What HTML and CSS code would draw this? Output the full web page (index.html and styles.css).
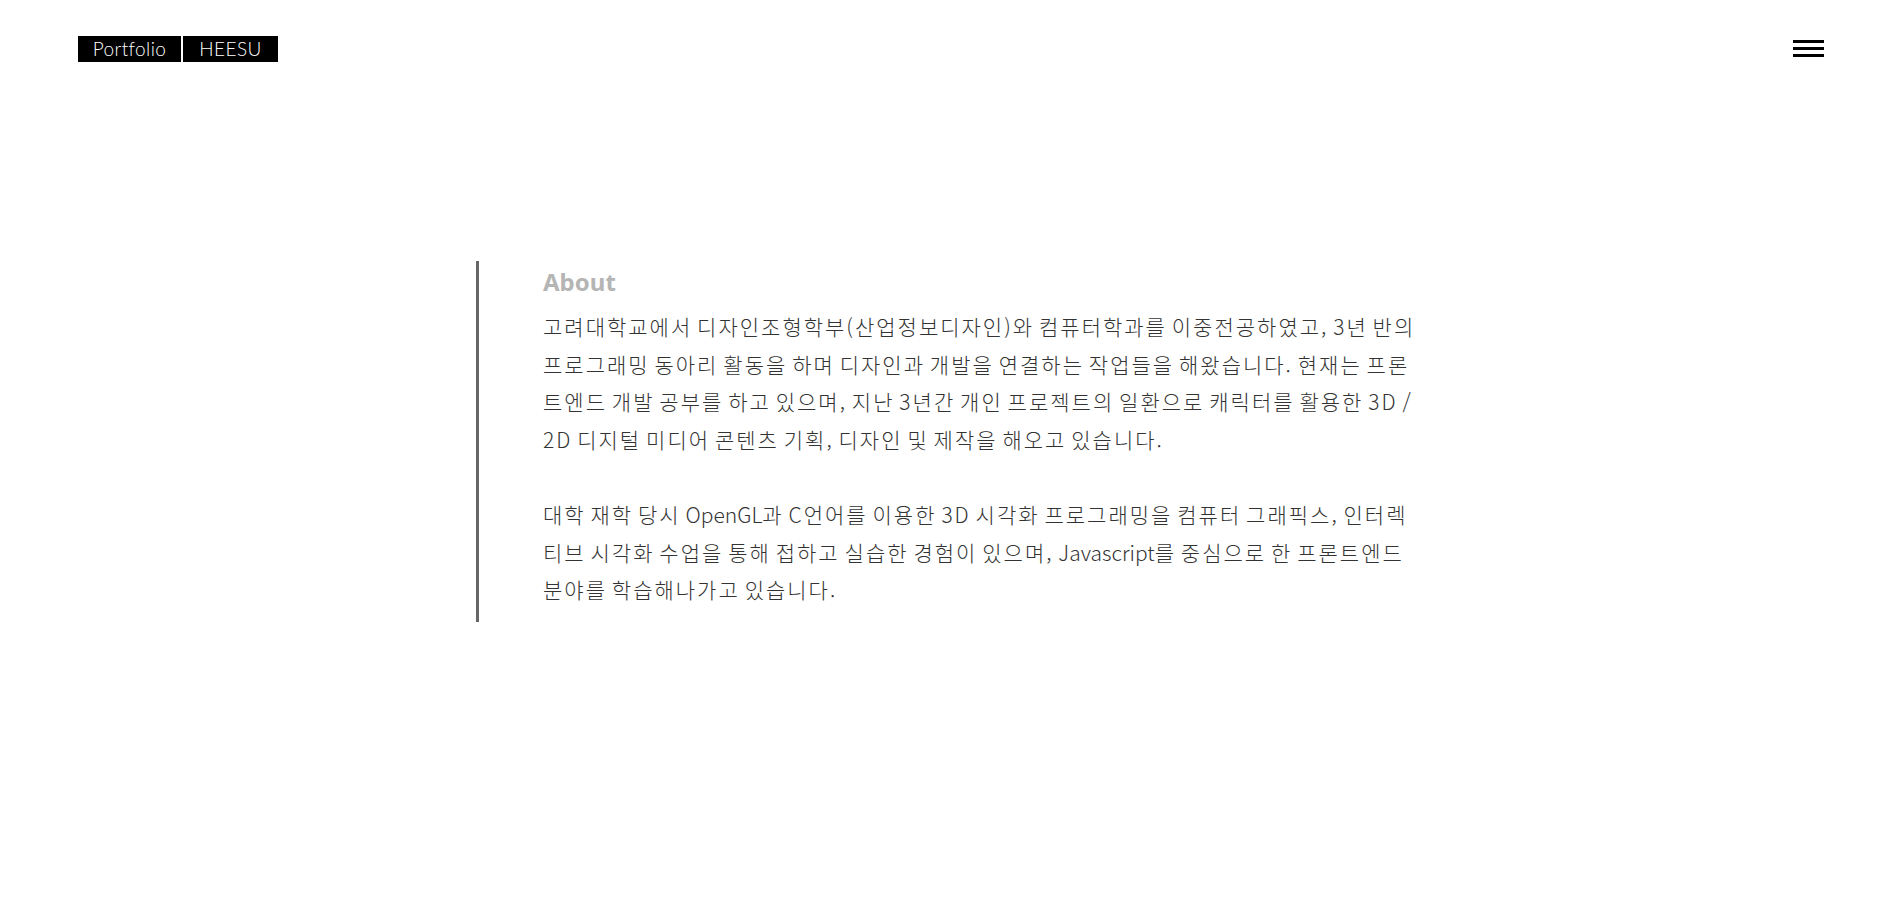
FILE: index.html
```html
<!DOCTYPE html>
<html lang="ko">
<head>
<meta charset="utf-8">
<title>Portfolio HEESU</title>
<link rel="stylesheet" href="styles.css">
</head>
<body>
<header class="header">
  <a class="logo" href="#">
    <span class="logo-part">Portfolio</span>
    <span class="logo-part">HEESU</span>
  </a>
  <button class="menu" aria-label="menu">
    <span class="bar"></span>
    <span class="bar"></span>
    <span class="bar"></span>
  </button>
</header>
<main class="main">
  <section class="about">
    <h2 class="about-title">About</h2>
    <p class="about-text">고려대학교에서 디자인조형학부(산업정보디자인)와 컴퓨터학과를 이중전공하였고, 3년 반의 프로그래밍 동아리 활동을 하며 디자인과 개발을 연결하는 작업들을 해왔습니다. 현재는 프론트엔드 개발 공부를 하고 있으며, 지난 3년간 개인 프로젝트의 일환으로 캐릭터를 활용한 3D / 2D 디지털 미디어 콘텐츠 기획, 디자인 및 제작을 해오고 있습니다.</p>
    <p class="about-text">대학 재학 당시 <span class="latin">OpenGL</span>과 C언어를 이용한 3D 시각화 프로그래밍을 컴퓨터 그래픽스, 인터렉티브 시각화 수업을 통해 접하고 실습한 경험이 있으며, <span class="latin">Javascript</span>를 중심으로 한 프론트엔드 분야를 학습해나가고 있습니다.</p>
  </section>
</main>
</body>
</html>
```

FILE: styles.css
```css
* { box-sizing: border-box; }
html, body { margin: 0; padding: 0; background: #fff; }
body { font-family: "Noto Sans CJK KR", "Noto Sans", sans-serif; color: #333; }

.header {
  display: flex;
  justify-content: space-between;
  align-items: flex-start;
  padding: 36px 80px 0 78px;
}
.logo {
  display: flex;
  gap: 2px;
  text-decoration: none;
}
.logo-part {
  display: block;
  height: 26px;
  line-height: 26px;
  background: #000;
  color: #fff;
  font-family: "Lato", sans-serif;
  font-weight: 300;
  font-size: 19px;
  letter-spacing: 0.4px;
  text-align: center;
}
.logo-part:first-child { width: 103px; }
.logo-part:last-child { width: 95px; }

.menu {
  display: flex;
  flex-direction: column;
  gap: 4px;
  width: 31px;
  margin-top: 4px;
  padding: 0;
  border: 0;
  background: none;
}
.bar { display: block; height: 3px; width: 31px; background: #000; }

.main {
  display: flex;
  justify-content: center;
  padding-top: 199px;
}
.about {
  width: 952px;
  border-left: 3px solid #666;
  padding: 0 6px 13px 64px;
}
.about-title {
  margin: 3px 0 8px;
  font-family: "Noto Sans", sans-serif;
  font-weight: 700;
  font-size: 24px;
  line-height: 36px;
  color: #b5b5b5;
}
.about-text {
  margin: 0 0 37.6px;
  font-size: 21px;
  line-height: 37.6px;
  font-weight: 300;
  letter-spacing: 2px;
  word-spacing: -3px;
  color: #333;
}
.about-text:last-child { margin-bottom: 0; }
.latin { letter-spacing: 0; }
```
